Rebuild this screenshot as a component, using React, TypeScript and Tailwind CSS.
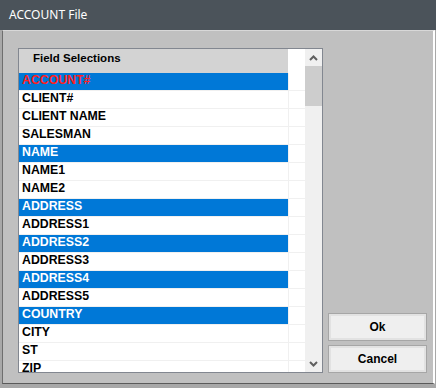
import React from "react";

const rows: { t: string; hl?: boolean; red?: boolean }[] = [
  { t: "ACCOUNT#", hl: true, red: true },
  { t: "CLIENT#" },
  { t: "CLIENT NAME" },
  { t: "SALESMAN" },
  { t: "NAME", hl: true },
  { t: "NAME1" },
  { t: "NAME2" },
  { t: "ADDRESS", hl: true },
  { t: "ADDRESS1" },
  { t: "ADDRESS2", hl: true },
  { t: "ADDRESS3" },
  { t: "ADDRESS4", hl: true },
  { t: "ADDRESS5" },
  { t: "COUNTRY", hl: true },
  { t: "CITY" },
  { t: "ST" },
  { t: "ZIP" },
];

const sans = { fontFamily: '"Liberation Sans", Arial, sans-serif' };

function Button({ label }: { label: string }) {
  return (
    <div className="h-[28px] w-[99px] border border-[#a6a6a6] bg-[#efefef] shadow-[inset_0_0_0_2px_#e2e2e2] flex items-center justify-center text-[12px] font-bold text-black" style={sans}>
      {label}
    </div>
  );
}

export default function App() {
  return (
    <div className="w-[436px] h-[388px] bg-[#a8a8a8] flex flex-col overflow-hidden">
      <div className="h-[31px] bg-[#4b535a] flex items-center pl-[9px] text-white text-[12px] pb-[1px]" style={{ fontFamily: '"Noto Sans", "Open Sans", sans-serif' }}>
        ACCOUNT File
      </div>
      <div className="flex-1 pl-[2px] pr-[1px] pb-[4px] flex">
        <div className="flex-1 bg-[#c0c0c0] border-t border-l border-t-[#d8d8d8] border-l-[#6e6e6e] border-r-2 border-r-white border-b border-b-[#5a5a5a] flex pl-[15px] pt-[17px] pr-[5px] pb-[10px] gap-[5px]">
          <div className="w-[305px] h-[325px] border border-[#828790] bg-white flex">
            <div className="w-[286px] flex flex-col">
              <div className="flex h-[24px] shrink-0">
                <div className="w-[269px] bg-[#d3d3d3] pl-[14px] pt-[2px] text-[11.5px] leading-[14px] font-bold text-black" style={sans}>
                  Field Selections
                </div>
                <div className="w-[17px] bg-white" />
              </div>
              <div className="flex-1 overflow-hidden flex flex-col">
                {rows.map((r) => (
                  <div key={r.t} className="flex h-[18px] shrink-0 border-b border-[#f0f0f0]">
                    <div
                      className={`w-[269px] h-[17px] pl-[3px] text-[12.3px] leading-[14px] font-bold ${r.hl ? "bg-[#0078d7]" : "bg-white"} ${r.red ? "text-[#ff2020]" : r.hl ? "text-white" : "text-black"}`}
                      style={sans}
                    >
                      {r.t}
                    </div>
                    <div className="w-[17px] h-[17px] border-l border-[#f0f0f0]" />
                  </div>
                ))}
              </div>
            </div>
            <div className="w-[17px] bg-[#f0f0f0] flex flex-col">
              <div className="h-[17px] flex items-center justify-center">
                <svg width="9" height="6" viewBox="0 0 9 6">
                  <polyline points="1,5 4.5,1.5 8,5" fill="none" stroke="#606060" strokeWidth="2" />
                </svg>
              </div>
              <div className="h-[40px] bg-[#cdcdcd]" />
              <div className="flex-1" />
              <div className="h-[17px] flex items-center justify-center">
                <svg width="9" height="6" viewBox="0 0 9 6">
                  <polyline points="1,1 4.5,4.5 8,1" fill="none" stroke="#606060" strokeWidth="2" />
                </svg>
              </div>
            </div>
          </div>
          <div className="flex flex-col justify-end gap-[4px]">
            <Button label="Ok" />
            <Button label="Cancel" />
          </div>
        </div>
      </div>
    </div>
  );
}
